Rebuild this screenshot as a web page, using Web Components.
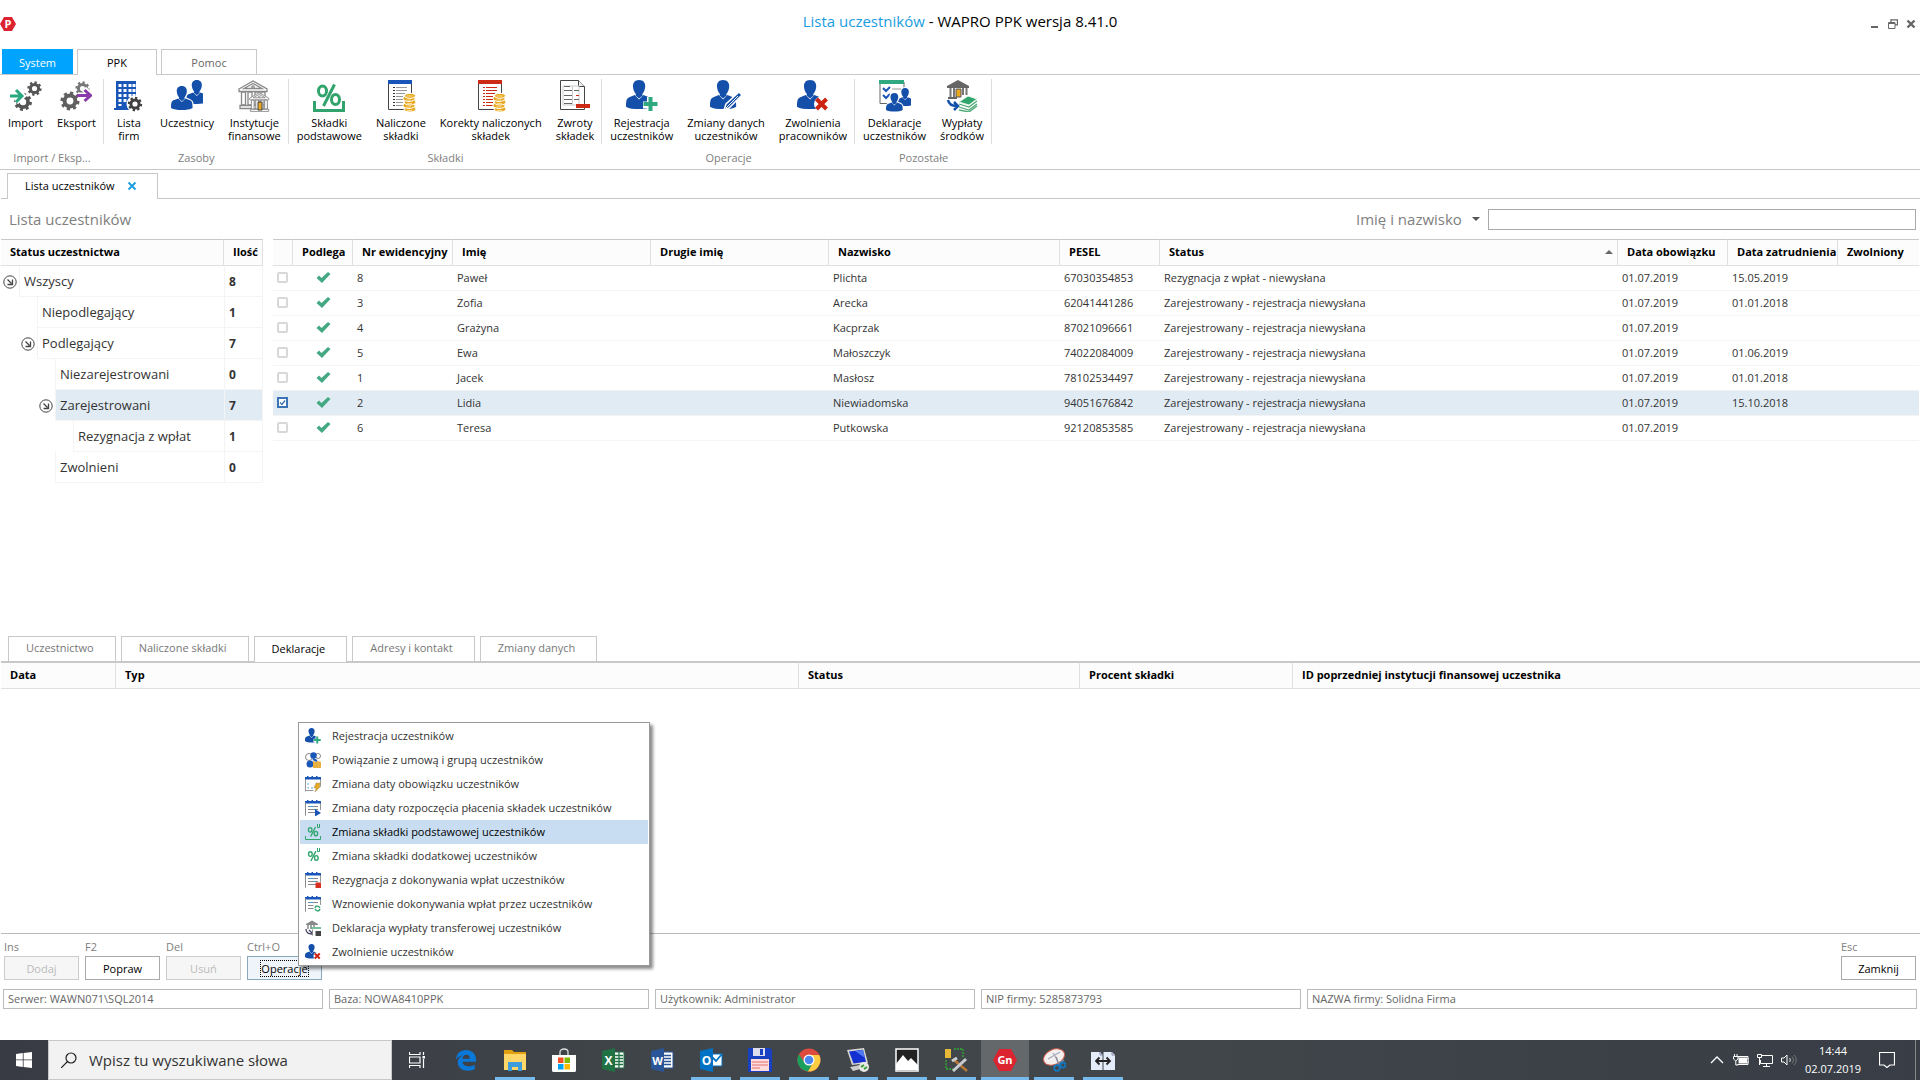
<!DOCTYPE html>
<html lang="pl">
<head>
<meta charset="utf-8">
<title>Lista uczestników - WAPRO PPK wersja 8.41.0</title>
<style>
    :root {
        --line: #c8c8c8;
        --soft: #e0e0e0;
        --faint: #f4f4f4;
        --head: #fcfcfc;
        --select: #e1ebf3;
        --text: #333;
        --muted: #808080;
        --blue: #1a9de0;
    }
    body {
        margin: 0;
        background: #fff;
        color: var(--text);
        font-family: 'Open Sans', 'Noto Sans', sans-serif;
        font-size: 11px;
        line-height: 13px;
    }
</style>
</head>
<body>
<app-window></app-window>
<script>
/* ---------- icons ---------- */

const gear = (cx, cy, r, color) => `
    <circle cx="${cx}" cy="${cy}" r="${r * 0.68}" fill="none" stroke="${color}" stroke-width="${r * 0.5}"/>
    <circle cx="${cx}" cy="${cy}" r="${r}" fill="none" stroke="${color}" stroke-width="${r * 0.38}" pathLength="16" stroke-dasharray="1 1"/>`;

const person = (x, y, s, color = '#1450aa') => `
    <g transform="translate(${x} ${y}) scale(${s})" fill="${color}">
        <path d="M13.5 0C9 0 7 3 7.2 7c.2 3 1.3 5.5 3 7.5l-.4 1.5L13.5 19l3.7-3-.4-1.5c1.7-2 2.800-4.5 3-7.5C20 3 18 0 13.5 0z"/>
        <path d="M9 15.5L4 17.5C1 18.7 0 20 0 27.5 3 29.5 8 30 13.5 30s10.5-.5 13.5-2.5c0-7.5-1-8.8-4-10l-5-2-4.5 4.5z"/>
    </g>`;

const coins = `
    <g fill="#e8a820" stroke="#fff" stroke-width="1">
        <ellipse cx="25" cy="29" rx="6" ry="3"/><ellipse cx="24" cy="25.5" rx="6" ry="3"/>
        <ellipse cx="25" cy="22" rx="6" ry="3"/><ellipse cx="24" cy="18.5" rx="6" ry="3"/>
        <ellipse cx="25" cy="15.8" rx="5.5" ry="2.5"/>
    </g>
    <path d="M21.5 16h6M21 20h5M22 23.5h5M21 27h5M22 30.5h5" stroke="#f8dc90" fill="none"/>`;

const report = (color, text) => `
    <path d="M3.5 3v26.5h23V3" fill="#fff" stroke="#444"/>
    <path d="M3 0h24v4H3z" fill="${color}"/>
    <path d="M8 7.5h2M8 10.5h2M8 13.5h2M8 16.5h2M8 19.5h2M8 22.5h2M8 25.5h2" stroke="${text}"/>
    <path d="M11 7.5h11M11 10.5h11M11 13.5h9M11 16.5h7M11 19.5h7M11 22.5h7M11 25.5h7" stroke="${color === '#1a56b8' ? '#999' : text}"/>
    ${coins}`;

const percent = `
    <g fill="none" stroke="#30a46c" stroke-width="3">
        <ellipse cx="9.5" cy="11" rx="4" ry="5"/><ellipse cx="22.5" cy="19.5" rx="4" ry="5"/>
        <path d="M21.5 4.5L10.5 26"/>
    </g>`;

const calendar = `
    <path d="M.5 2v13.5M15.5 2v8" fill="none" stroke="#999"/>
    <path d="M0 1h2V0h1.500v1h3V0H8v1h3V0h1.500v1H16v2.500H0z" fill="#1a56b8"/>`;
const calendarRows = '<path d="M3 6.5h10M3 9.5h10M3 12.5h8M.5 15.500v-13" stroke="#888"/><path d="M5 6.5h3M9 9.5h2" stroke="#3aa0d0"/>';

const bank = (x, y, s, color, fill = '#fff') => `
    <g transform="translate(${x} ${y}) scale(${s})" fill="${fill}" stroke="${color}" stroke-width="1.3">
        <path d="M1 9L15 1l14 8v2.5H1z"/><path d="M6 8.5L15 3.5l9 5z"/>
        <path d="M3.5 12h4v13h-4zM10 12h4v13h-4zM17 12h4v13h-4zM23 12h4v13h-4z"/>
        <path d="M2 25.5h27v3H2z"/><circle cx="15" cy="7" r="1.2"/>
    </g>`;

// every entry: [viewBox size, markup]
const ICONS = {
    logo: [16, '<path d="M4 1h8l4 7-4 7H4L0 8z" fill="#dc2430"/><text x="8" y="12" text-anchor="middle" font-size="11" font-weight="700" fill="#fff" font-family="Open Sans">P</text>'],
    import: [32, gear(24.5, 8.5, 6, '#555') + gear(13, 22, 7.5, '#555') + '<path d="M0 16h8M6 9.5l6.5 6.5L6 22" fill="none" stroke="#fff" stroke-width="6"/><path d="M0 16h11M6 10l6 6-6 6" fill="none" stroke="#2aa880" stroke-width="3"/>'],
    export: [32, gear(22.5, 8.5, 6, '#777') + gear(10, 21, 8, '#606060') + '<path d="M18 15.5h12M24 9l7 6.5-7 6.5" fill="none" stroke="#fff" stroke-width="6"/><path d="M17 15.5h13M24.5 10l6 5.5-6 5.5" fill="none" stroke="#8a3aaa" stroke-width="3"/>'],
    company: [32, '<path d="M3 1h20v29H1v-2h2z" fill="#1a56b8"/><path d="M7 4v22M12 4v19M17 4v16M21 4v13" stroke="#fff" stroke-width="3" stroke-dasharray="3 2"/><circle cx="22" cy="24" r="8.5" fill="#fff"/>' + gear(22, 24, 6, '#404040')],
    people: [32, person(15, 0, 0.8) + '<g stroke="#fff" stroke-width="3">' + person(0, 6, 0.8) + '</g>' + person(0, 6, 0.8)],
    banks: [32, bank(0, 0, 1, '#888') + bank(11, 12, 0.68, '#888') + '<path d="M20 22h4v8h-4z" fill="#e8a820" stroke="#444"/>'],
    base: [32, percent + '<path d="M1.5 21v9.5h29V21" fill="none" stroke="#30a46c" stroke-width="3"/>'],
    charged: [32, report('#1a56b8', '#333')],
    corrected: [32, report('#cc2a14', '#cc2a14')],
    refunds: [32, '<path d="M1.5.5h18l6 6v23h-24z" fill="#fff" stroke="#444"/><path d="M19.5.5v6h6" fill="#eee" stroke="#444"/><path d="M4 6h16v19H4zM13.5 6v19" fill="none" stroke="#ccc"/><path d="M5 6.5h6M5 10.5h8M15 10.5h5M5 15.5h8M5 19.5h8M15 19.5h5M5 23.5h8" stroke="#666"/><path d="M17 15.5h3" stroke="#cc2a14"/><path d="M17 24h14v4H17z" fill="#cc2a14"/>'],
    register: [32, person(0, 0, 0.97) + '<path d="M17 21.5h4V17h6v4.5h5v7h-5v3h-6v-3h-4z" fill="#fff"/><path d="M24.5 17v14M17.5 24h14" stroke="#30a880" stroke-width="4"/>'],
    edit: [32, person(0, 0, 0.97) + '<path d="M14 30l2-6 13-12 3 3-13 13z" fill="#1450aa" stroke="#fff" stroke-width="1.5"/><path d="M16 28l12-12" stroke="#fff"/>'],
    dismiss: [32, person(0, 0, 0.97) + '<circle cx="24.5" cy="24" r="7.5" fill="#fff"/><path d="M19.5 19l10 10M29.5 19l-10 10" stroke="#cc2410" stroke-width="4"/>'],
    declare: [32, '<path d="M1 2v21.5h24V2" fill="#fff" stroke="#666"/><path d="M0 0h25v4H0z" fill="#30a880"/><path d="M4 8l3 3 4-4M4 15l3 3 4-4" fill="none" stroke="#1a56b8" stroke-width="2"/><path d="M13 9h9" stroke="#bbb" stroke-width="1.5"/><g stroke="#fff" stroke-width="3">' + person(18, 8, 0.6) + '</g>' + person(18, 8, 0.6) + '<g stroke="#fff" stroke-width="4">' + person(7, 13, 0.62) + '</g>' + person(7, 13, 0.62)],
    payout: [32, '<path d="M1 6l11-6 11 6v2H1z" fill="#666"/><path d="M2 18h9" stroke="#666" stroke-width="2"/><path d="M4.5 8v9M8 8v9M17 8v7M20.5 8v7" stroke="#777" stroke-width="2"/><path d="M10 9h5v8h-5z" fill="#e8a820" stroke="#555"/><path d="M2 20c1 5 5 6 9 6M8 22l4 4-4 4" fill="none" stroke="#1450aa" stroke-width="2.5"/><path d="M13 22l9-6 9 3-8 6z" fill="#30a46c" stroke="#e8f8e8"/><path d="M13 24l10 3 8-6M13 27l10 3 8-6M13 30l10 2 8-6" fill="none" stroke="#50a878" stroke-width="1.3"/>'],
    bindGroup: [16, '<circle cx="4" cy="5" r="3.5" fill="none" stroke="#888"/><circle cx="13" cy="4" r="2.5" fill="none" stroke="#888"/><circle cx="8.5" cy="3.5" r="3.2" fill="#1a56b8"/><circle cx="5" cy="12" r="3.5" fill="#1a56b8"/><path d="M8 9l3 1 2-1 3 1v6H8z" fill="#e8b040"/><path d="M8 7l4 2" stroke="#1a56b8" stroke-width="2"/>'],
    dateDuty: [16, calendar + '<path d="M.5 14.500h8" stroke="#999"/><path d="M3 7v5h6" fill="none" stroke="#50b0e0" stroke-dasharray="2 2"/><path d="M11 7h5l-2 3h2l-6 6 1-4H9z" fill="#e8a820" stroke="#998" stroke-width=".5"/>'],
    dateStart: [16, calendar + calendarRows + '<path d="M10 9l6 4-6 3.5z" fill="#1a56b8"/>'],
    baseUser: [16, '<g transform="translate(1 1) scale(.44)">' + percent + '</g><path d="M.5 12v3.500h15V12" fill="none" stroke="#30a46c"/><path d="M12.500 0v3.500h2V0" fill="none" stroke="#30a46c"/>'],
    extraUser: [16, '<g transform="translate(1 1) scale(.46)">' + percent + '</g><path d="M12.500 0v3.500h2V0" fill="none" stroke="#30a46c"/>'],
    resign: [16, calendar + calendarRows + '<path d="M10.5 10.5H16V16h-5.5z" fill="#d83020"/>'],
    resume: [16, calendar + calendarRows + '<path d="M8.5 9H16v7H8.5z" fill="#fff"/><path d="M10 12c1-3 4-2 5 0M15 13c-1 3-4 2-5 0" fill="none" stroke="#30a46c" stroke-width="1.5"/>'],
    transfer: [16, '<path d="M1 4l6-3.5L13 4v1H1z" fill="#888"/><path d="M3 5v4M6 5v4M9 5v2" stroke="#888" stroke-width="1.5"/><path d="M1 9c0 4 3 5 6 5M4 10l3 3" fill="none" stroke="#446" stroke-width="1.3"/><path d="M6 8h10" stroke="#50a878" stroke-width="1.5"/><path d="M7.5 9.5v6" stroke="#888"/><path d="M10.5 11H16v5h-5.5z" fill="#444"/>'],
    tick: [16, '<path d="M1.5 8l2.5-2.5L6.5 8l6.5-6 2.5 2L7 13z" fill="#44a882"/>'],
    node: [14, '<circle cx="7" cy="7" r="6.2" fill="#fff" stroke="#444"/><path d="M4.5 4.5l4 4M9.5 4.5v5h-5" fill="none" stroke="#444" stroke-width="1.3"/>'],
    checked: [11, '<path d="M3 5.500l2 2 3-4" fill="none" stroke="#3a74b4" stroke-width="1.3"/>'],
    close: [10, '<path d="M1.5 1.5l7 7M8.5 1.5l-7 7" stroke="#1a9de0" stroke-width="1.8"/>'],
    winMin: [10, '<path d="M1 7h7v2H1z" fill="#666"/>'],
    winRestore: [10, '<path d="M3 3V.8h6.5v5H7" fill="none" stroke="#666" stroke-width="1.3"/><path d="M.5 3.5h6.5v6H.5zM.5 4.5H7" fill="none" stroke="#666"/>'],
    winClose: [10, '<path d="M1.5 1.5l7 7M8.5 1.5l-7 7" stroke="#666" stroke-width="2.4"/>'],
    start: [16, '<path d="M0 2l6.8-1v6.5H0zM7.6.9L16 0v7.5H7.6zM0 8.3h6.8V15L0 14zM7.6 8.3H16V16l-8.4-1.1z" fill="#fff"/>'],
    lens: [16, '<circle cx="10" cy="6" r="5" fill="none" stroke="#222" stroke-width="1.2"/><path d="M6.5 9.5L0 16" stroke="#222" stroke-width="1.2"/>'],
    tasks: [16, '<path d="M.5 0v2.5h10.5V0M.5 5h10.5v6H.5zM.5 16v-2.5h10.5V16M14.5 0v3M14.5 7v9" fill="none" stroke="#fff" stroke-width="1.2"/><path d="M13.5 4h2.5v2.5h-2.5z" fill="#fff"/>'],
    edge: [24, '<path fill-rule="evenodd" d="M1 11.500C1.500 5 6 1 12 1c7 0 11 5 11 10.500v2.500H8c.5 3.500 3.500 5 7 5 2.500 0 4.500-.6 6.500-1.700v4.700c-2 1-4.500 1.600-7.500 1.600C7 23.600 3 19.500 3 14.500 3 11 5 8.500 8 7 5 7.500 2.500 9 1 11.500zM8.200 10.500h8c0-3-1.500-4.300-3.800-4.300S8.500 8 8.200 10.500z" fill="#0a78d8"/>'],
    explorer: [24, '<path d="M1 2h8l2 2h12v18H1z" fill="#e0a010"/><path d="M1 6h22v16H1z" fill="#ffd668"/><path d="M5 23v-9h14v9h-4v-4H9v4z" fill="#3c9cdc"/>'],
    store: [24, '<path d="M8 8V4c0-4 8-4 8 0v4" fill="none" stroke="#ddd" stroke-width="1.3"/><path d="M0 7h24v16l-1 1H1l-1-1z" fill="#fff"/><path d="M6 9.5h5.5V15H6z" fill="#f25022"/><path d="M12.5 9.5H18V15h-5.5z" fill="#7fba00"/><path d="M6 16h5.5v5.5H6z" fill="#00a4ef"/><path d="M12.5 16H18v5.5h-5.5z" fill="#ffb900"/>'],
    excel: [24, '<path d="M12 4h11v16H12z" fill="#fff" stroke="#207245"/><path d="M13 7.5h9M13 10.5h9M13 13.5h9M13 16.5h9M18 4v16" stroke="#207245" stroke-width="1.3"/><path d="M1 3l13-3v24L1 21z" fill="#207245"/><text x="7.5" y="16.5" text-anchor="middle" font-size="12" font-weight="700" fill="#fff" font-family="Open Sans">X</text>'],
    word: [24, '<path d="M12 4h11v16H12z" fill="#fff" stroke="#2a5699"/><path d="M14 7.5h7M14 10.5h7M14 13.5h7M14 16.5h7" stroke="#2a5699" stroke-width="1.3"/><path d="M1 3l13-3v24L1 21z" fill="#2a5699"/><text x="7.5" y="16.5" text-anchor="middle" font-size="11" font-weight="700" fill="#fff" font-family="Open Sans">W</text>'],
    outlook: [24, '<path d="M12 6h11v12H12z" fill="#fff" stroke="#0072c6"/><path d="M13 9l4 4 6-7" fill="none" stroke="#0072c6" stroke-width="1.8"/><path d="M1 3l13-3v24L1 21z" fill="#0072c6"/><text x="7.5" y="16.5" text-anchor="middle" font-size="12" font-weight="700" fill="#fff" font-family="Open Sans">O</text>'],
    floppy: [24, '<path d="M0 0h22l2 2v22H0z" fill="#1840c0"/><path d="M5 0h12v8H5z" fill="#dde"/><path d="M12 1h3v6h-3z" fill="#1840c0"/><path d="M3 11h18v12H3z" fill="#fdd"/><path d="M4 14h16M4 17h16M4 20h8" stroke="#e07070"/>'],
    chrome: [24, '<circle cx="12" cy="12" r="11.5" fill="#dd4b3e"/><path d="M2 6.2A11.5 11.5 0 0 0 11 23.5l5.5-9.5H7z" fill="#18a05c"/><path d="M22.2 7H12l4.5 7L11 23.5A11.5 11.5 0 0 0 22.2 7z" fill="#ffcd42"/><circle cx="12" cy="12" r="5.5" fill="#fff"/><circle cx="12" cy="12" r="4.3" fill="#4a88f0"/>'],
    remote: [24, '<path d="M1 2l17-2 4 15-16 2z" fill="#d8d8d0"/><path d="M3 3.5l14-1.7 3 12L7.5 15.5z" fill="#1430d0"/><path d="M9 3l8-1 2 8z" fill="#5078f0"/><path d="M4 19l10-2 4 3-11 3z" fill="#ccc"/><circle cx="18" cy="19" r="5" fill="#e8e8e8"/><path d="M15 19l3-2M18 21l3-2" stroke="#30a030" stroke-width="2"/>'],
    photos: [24, '<path d="M1 1h22v22H1z" fill="#222" stroke="#fff" stroke-width="1.5"/><path d="M1 22V16l7-9 5 6 3-3 7 7v5z" fill="#fff"/>'],
    tools: [24, '<path d="M1 1h6v9H1z" fill="#e8b838"/><path d="M10 1h9v9M2 12v9h7" fill="none" stroke="#30b030" stroke-width="1.3" stroke-dasharray="2 1"/><path d="M10 12l13 11" stroke="#b87838" stroke-width="2.5"/><path d="M22 11L9 23" stroke="#c8ccd0" stroke-width="3"/><path d="M8 13l5-3" stroke="#ccc" stroke-width="3"/>'],
    gn: [24, '<path d="M6 1h12l6 11-6 11H6L0 12z" fill="#dc2430"/><text x="12" y="16" text-anchor="middle" font-size="11" font-weight="700" fill="#fff" font-family="Open Sans">Gn</text>'],
    snip: [24, '<ellipse cx="12" cy="9" rx="11" ry="7.5" transform="rotate(-25 12 9)" fill="#f4f0f0" stroke="#d06050"/><path d="M6 11l12-7M11 5l4 6" stroke="#aab" stroke-width="1.3"/><path d="M14 9l3 8M17 15l5-3" stroke="#889" stroke-width="1.5"/><circle cx="15" cy="20" r="2.8" fill="none" stroke="#1478c0" stroke-width="1.8"/><circle cx="21" cy="17" r="2.5" fill="none" stroke="#1478c0" stroke-width="1.8"/>'],
    viewer: [24, '<path d="M0 4h9l2.500 3v15H0zM12.5 4H21l3 3v15H12.5z" fill="#e4ecfa"/><path d="M9 4v3h3M21 4v3h3" fill="none" stroke="#88a"/><path d="M5 13h14M8.500 9.500L5 13l3.500 3.500M15.500 9.500L19 13l-3.500 3.500" fill="none" stroke="#222" stroke-width="1.8"/>'],
    chevron: [16, '<path d="M2 11l6-6 6 6" fill="none" stroke="#fff" stroke-width="1.3"/>'],
    battery: [16, '<path d="M5.5 5.5h9v6h-9z" fill="#fff"/><path d="M4.5 4.5H15V7h1v3h-1v2.5H4.5" fill="none" stroke="#fff"/><path d="M1.5 2v2M4 2v2M.5 4.5h4.5v2.5L2.8 9 .5 7zM2.8 9v4H5" fill="none" stroke="#fff"/>'],
    network: [16, '<path d="M5 3.5h10.5v8H3.5V8M6 14.5h7M9.5 12v2.5" fill="none" stroke="#fff"/><path d="M.5 2.5h4v3h-4zM2.5 6v7" fill="none" stroke="#fff"/>'],
    sound: [16, '<path d="M.5 6H3l3-3v10l-3-3H.5z" fill="none" stroke="#fff"/><path d="M8.5 6c1 1 1 3 0 4" fill="none" stroke="#ddd"/><path d="M11 4.5c2 2 2 5 0 7M13 3c3 3 3 7 0 10" fill="none" stroke="#777"/>'],
    notice: [16, '<path d="M.5.5h15v12.5H11l-3 2.5-3-2.5H.5z" fill="none" stroke="#fff" stroke-width="1.2"/>']
};

class AppIcon extends HTMLElement {
    constructor() {
        super();
        this.attachShadow({ mode: 'open' });
    }

    connectedCallback() {
        const [box, markup] = ICONS[this.getAttribute('name')];
        const size = this.getAttribute('size') || box;
        this.shadowRoot.innerHTML = `
        <style>
            :host { display: inline-flex; flex: none; }
            svg { display: block; }
        </style>
        <svg width="${size}" height="${size}" viewBox="0 0 ${box} ${box}" aria-hidden="true">${markup}</svg>`;
    }
}

/* ---------- base for the elements below ---------- */

class BaseElement extends HTMLElement {
    constructor() {
        super();
        this.attachShadow({ mode: 'open' });
    }

    connectedCallback() {
        const template = document.createElement('template');
        template.innerHTML = `
        <style>
            * { box-sizing: border-box; }
            button { font: inherit; color: inherit; background: none; border: 0; padding: 0; margin: 0; }
            table { border-collapse: separate; border-spacing: 0; table-layout: fixed; width: 100%; }
            th, td { text-align: left; white-space: nowrap; overflow: hidden; }
            th { height: 27px; padding: 0 9px 2px; color: #000; font-weight: 700; background: var(--head);
                border: 0 solid var(--soft); border-right-width: 1px; border-bottom-width: 1px; border-top: 1px solid var(--line); }
            ${this.getStyles()}
        </style>
        ${this.getTemplate()}`;
        this.shadowRoot.appendChild(template.content.cloneNode(true));
    }
}

class TitleBar extends BaseElement {
    getStyles() {
        return `
        :host { display: grid; grid-template-columns: 1fr auto 1fr; align-items: center; height: 49px; box-sizing: border-box; padding-bottom: 2px; }
        h1 { margin: 0 0 6px; font-size: 15px; line-height: 20px; font-weight: 400; color: #000; }
        h1 span { color: var(--blue); }
        .controls { display: flex; gap: 8px; justify-content: flex-end; padding-right: 4px; }
        .controls button { display: flex; }`;
    }

    getTemplate() {
        return `
        <app-icon name="logo"></app-icon>
        <h1><span>Lista uczestników</span> - WAPRO PPK wersja 8.41.0</h1>
        <div class="controls">
            <button aria-label="Minimalizuj"><app-icon name="winMin"></app-icon></button>
            <button aria-label="Przywróć"><app-icon name="winRestore"></app-icon></button>
            <button aria-label="Zamknij okno"><app-icon name="winClose"></app-icon></button>
        </div>`;
    }
}

class RibbonButton extends BaseElement {
    getStyles() {
        return `
        :host { display: flex; }
        button { display: flex; flex-direction: column; align-items: center; gap: 4px; min-width: 48px; padding: 1px 7px 0; color: #000; text-align: center; white-space: pre-line; }`;
    }

    getTemplate() {
        return `<button><app-icon name="${this.getAttribute('icon')}"></app-icon><span><slot></slot></span></button>`;
    }
}

class RibbonGroup extends BaseElement {
    getStyles() {
        return `
        :host { display: flex; flex-direction: column; }
        .items { display: flex; height: 65px; padding-left: 1px; border-right: 1px solid #ddd; }
        .caption { margin-top: 7px; text-align: center; color: var(--muted); }`;
    }

    getTemplate() {
        return `<div class="items"><slot></slot></div><div class="caption">${this.getAttribute('caption')}</div>`;
    }
}

class RibbonBar extends BaseElement {
    getStyles() {
        return `
        :host { display: block; border-bottom: 1px solid var(--line); }
        nav { display: flex; align-items: flex-end; gap: 4px; padding-left: 2px; border-bottom: 1px solid var(--line); }
        nav button { width: 96px; height: 25px; border: 1px solid var(--line); border-bottom: 0; color: #666; }
        nav .system { width: 71px; background: #00a4ff; border-color: #00a4ff; color: #fff; }
        nav .active { width: 80px; height: 26px; margin-bottom: -1px; background: #fff; color: #000; }
        .groups { display: flex; height: 94px; padding-top: 4px; }`;
    }

    getTemplate() {
        return `
        <nav><button class="system">System</button><button class="active">PPK</button><button>Pomoc</button></nav>
        <div class="groups">
            <ribbon-group caption="Import / Eksp...">
                <ribbon-button icon="import">Import</ribbon-button>
                <ribbon-button icon="export">Eksport</ribbon-button>
            </ribbon-group>
            <ribbon-group caption="Zasoby">
                <ribbon-button icon="company">Lista\nfirm</ribbon-button>
                <ribbon-button icon="people">Uczestnicy</ribbon-button>
                <ribbon-button icon="banks">Instytucje\nfinansowe</ribbon-button>
            </ribbon-group>
            <ribbon-group caption="Składki">
                <ribbon-button icon="base">Składki\npodstawowe</ribbon-button>
                <ribbon-button icon="charged">Naliczone\nskładki</ribbon-button>
                <ribbon-button icon="corrected">Korekty naliczonych\nskładek</ribbon-button>
                <ribbon-button icon="refunds">Zwroty\nskładek</ribbon-button>
            </ribbon-group>
            <ribbon-group caption="Operacje">
                <ribbon-button icon="register">Rejestracja\nuczestników</ribbon-button>
                <ribbon-button icon="edit">Zmiany danych\nuczestników</ribbon-button>
                <ribbon-button icon="dismiss">Zwolnienia\npracowników</ribbon-button>
            </ribbon-group>
            <ribbon-group caption="Pozostałe">
                <ribbon-button icon="declare">Deklaracje\nuczestników</ribbon-button>
                <ribbon-button icon="payout">Wypłaty\nśrodków</ribbon-button>
            </ribbon-group>
        </div>`;
    }
}

class DocumentHeader extends BaseElement {
    getStyles() {
        return `
        :host { display: block; padding: 3px 0 0 1px; }
        .tabs { display: flex; padding-left: 6px; border-bottom: 1px solid var(--line); }
        .tab { display: flex; align-items: center; justify-content: space-between; width: 151px; height: 26px; margin-bottom: -1px; padding: 0 20px 2px 17px; border: 1px solid var(--line); border-bottom: 0; background: #fff; color: #000; }
        .tab button { display: flex; }
        .bar { display: flex; align-items: center; height: 40px; padding: 0 4px 0 8px; font-size: 15px; color: var(--muted); }
        h2 { flex: 1; margin: 0; font-size: 15px; font-weight: 400; }
        select { appearance: none; width: 132px; padding: 0; border: 0; background: none; font: inherit; line-height: 20px; color: inherit; }
        .pick { position: relative; }
        .pick::after { content: ''; position: absolute; right: 8px; top: 8px; border: 4px solid transparent; border-top-color: #555; border-bottom: 0; }
        input { flex: 0 1 428px; height: 21px; border: 1px solid #aaa; padding: 0 4px; }`;
    }

    getTemplate() {
        return `
        <div class="tabs"><div class="tab"><span>Lista uczestników</span><button aria-label="Zamknij kartę"><app-icon name="close"></app-icon></button></div></div>
        <div class="bar">
            <h2>Lista uczestników</h2>
            <div class="pick"><select aria-label="Szukaj według"><option>Imię i nazwisko</option></select></div>
            <input type="text" aria-label="Szukana wartość">
        </div>`;
    }
}

class StatusTree extends BaseElement {
    getStyles() {
        return `
        :host { display: block; width: 262px; }
        td { height: 31px; padding: 0; font-size: 13px; }
        .node { display: flex; height: 31px; }
        .pad { display: flex; align-items: center; justify-content: flex-end; padding-right: 2px; }
        .pad button { display: flex; }
        .name { flex: 1; display: flex; align-items: center; padding-left: 4px; border: solid var(--faint); border-width: 0 0 1px 1px; }
        .count { padding-left: 4px; border: solid var(--faint); border-width: 0 1px 1px; font-size: 12px; font-weight: 700; }
        .on .name, .on .count { background: var(--select); }`;
    }

    getTemplate() {
        const rows = [
            ['Wszyscy', 8, 0, true], ['Niepodlegający', 1, 1], ['Podlegający', 7, 1, true],
            ['Niezarejestrowani', 0, 2], ['Zarejestrowani', 7, 2, true],
            ['Rezygnacja z wpłat', 1, 3], ['Zwolnieni', 0, 2]
        ];
        return `
        <table>
            <colgroup><col><col width="39"></colgroup>
            <tr><th>Status uczestnictwa</th><th>Ilość</th></tr>
            ${rows.map(([name, count, level, open]) => `
            <tr class="${name === 'Zarejestrowani' ? 'on' : ''}">
                <td><div class="node">
                    <span class="pad" style="width: ${18 + 18 * level}px">${open ? '<button aria-label="Zwiń"><app-icon name="node"></app-icon></button>' : ''}</span>
                    <span class="name">${name}</span>
                </div></td>
                <td class="count">${count}</td>
            </tr>`).join('')}
        </table>`;
    }
}

class ParticipantsGrid extends BaseElement {
    getStyles() {
        return `
        :host { display: block; flex: 1; min-width: 0; }
        th:last-child { border-right: 0; }
        td { height: 25px; padding: 0 4px 1px; border-bottom: 1px solid var(--faint); }
        td:nth-child(2) { text-align: center; }
        td app-icon { vertical-align: middle; }
        .on td { background: var(--select); }
        .sorted { display: flex; align-items: center; justify-content: space-between; }
        .sorted::after { content: ''; margin-right: -5px; border: 4px solid transparent; border-bottom-color: #666; border-top: 0; }
        .box { display: grid; width: 11px; height: 11px; }
        .box > * { grid-area: 1 / 1; }
        .box app-icon { pointer-events: none; }
        input { appearance: none; width: 11px; height: 11px; margin: 0; border: 2px solid #d8d8d8; border-radius: 2px; background: #fff; }
        input:checked { border-color: #3a74b4; border-radius: 0; }`;
    }

    getTemplate() {
        const late = 'Zarejestrowany - rejestracja niewysłana';
        const rows = [
            [8, 'Paweł', 'Plichta', '67030354853', 'Rezygnacja z wpłat - niewysłana', '15.05.2019'],
            [3, 'Zofia', 'Arecka', '62041441286', late, '01.01.2018'],
            [4, 'Grażyna', 'Kacprzak', '87021096661', late, ''],
            [5, 'Ewa', 'Małoszczyk', '74022084009', late, '01.06.2019'],
            [1, 'Jacek', 'Masłosz', '78102534497', late, '01.01.2018'],
            [2, 'Lidia', 'Niewiadomska', '94051676842', late, '15.10.2018'],
            [6, 'Teresa', 'Putkowska', '92120853585', late, '']
        ];
        return `
        <table>
            <colgroup>
                <col width="20"><col width="60"><col width="100"><col width="198"><col width="178"><col width="231">
                <col width="100"><col><col width="110"><col width="110"><col width="81">
            </colgroup>
            <tr>
                <th></th><th>Podlega</th><th>Nr ewidencyjny</th><th>Imię</th><th>Drugie imię</th><th>Nazwisko</th>
                <th>PESEL</th><th><div class="sorted">Status</div></th><th>Data obowiązku</th><th>Data zatrudnienia</th><th>Zwolniony</th>
            </tr>
            ${rows.map(([id, name, surname, pesel, status, hired]) => `
            <tr class="${id === 2 ? 'on' : ''}">
                <td><span class="box"><input type="checkbox" aria-label="Zaznacz: ${name} ${surname}"${id === 2 ? ' checked' : ''}>${id === 2 ? '<app-icon name="checked"></app-icon>' : ''}</span></td>
                <td><app-icon name="tick"></app-icon></td>
                <td>${id}</td><td>${name}</td><td></td><td>${surname}</td><td>${pesel}</td>
                <td>${status}</td><td>01.07.2019</td><td>${hired}</td><td></td>
            </tr>`).join('')}
        </table>`;
    }
}

class DetailsPanel extends BaseElement {
    getStyles() {
        return `
        :host { display: block; min-height: 0; padding-left: 1px; }
        nav { display: flex; align-items: flex-end; gap: 5px; padding-left: 7px; border-bottom: 1px solid var(--line); }
        nav button { height: 25px; padding: 0 21px 2px 17px; border: 1px solid var(--line); border-bottom: 0; color: #777; }
        nav .active { height: 26px; margin-bottom: -1px; background: #fff; color: #000; }
        th:last-child { border-right: 0; }`;
    }

    getTemplate() {
        return `
        <nav>
            <button>Uczestnictwo</button><button>Naliczone składki</button><button class="active">Deklaracje</button>
            <button>Adresy i kontakt</button><button>Zmiany danych</button>
        </nav>
        <table>
            <colgroup><col width="115"><col><col width="281"><col width="213"><col width="627"></colgroup>
            <tr><th>Data</th><th>Typ</th><th>Status</th><th>Procent składki</th><th>ID poprzedniej instytucji finansowej uczestnika</th></tr>
        </table>`;
    }
}

class ContextMenu extends BaseElement {
    getStyles() {
        return `
        :host { display: block; box-sizing: border-box; width: 352px; padding: 1px; border: 1px solid #999; background: #fff; box-shadow: 3px 3px 3px rgba(0, 0, 0, .45); }
        button { display: flex; align-items: center; gap: 11px; width: 100%; height: 24px; padding-left: 5px; color: #333; }
        span { padding-bottom: 2px; }
        .on { background: #c8ddf1; color: #000; }`;
    }

    getTemplate() {
        const items = [
            ['register', 'Rejestracja uczestników'],
            ['bindGroup', 'Powiązanie z umową i grupą uczestników'],
            ['dateDuty', 'Zmiana daty obowiązku uczestników'],
            ['dateStart', 'Zmiana daty rozpoczęcia płacenia składek uczestników'],
            ['baseUser', 'Zmiana składki podstawowej uczestników'],
            ['extraUser', 'Zmiana składki dodatkowej uczestników'],
            ['resign', 'Rezygnacja z dokonywania wpłat uczestników'],
            ['resume', 'Wznowienie dokonywania wpłat przez uczestników'],
            ['transfer', 'Deklaracja wypłaty transferowej uczestników'],
            ['dismiss', 'Zwolnienie uczestników']
        ];
        return items.map(([icon, label]) => `
        <button class="${icon === 'baseUser' ? 'on' : ''}"><app-icon name="${icon}" size="16"></app-icon><span>${label}</span></button>`).join('');
    }
}

class ActionButton extends BaseElement {
    getStyles() {
        return `
        :host { display: block; position: relative; width: 75px; }
        .key { display: block; margin-bottom: 3px; color: var(--muted); }
        button { width: 100%; height: 24px; border: 1px solid #aaa; background: #fff; color: #000; }
        button:disabled { border-color: #ccc; background: #f6f6f6; color: #bbb; }
        :host([open]) button { border-color: #8aa8bc; background: #eef4fa; }
        :host([open]) .label { outline: 1px dotted #000; }
        ::slotted(context-menu) { position: absolute; left: 51px; bottom: 14px; z-index: 2; }`;
    }

    getTemplate() {
        return `
        <label class="key" for="action">${this.getAttribute('key')}</label>
        <button id="action"${this.hasAttribute('off') ? ' disabled' : ''}><span class="label">${this.getAttribute('label')}</span></button>
        <slot></slot>`;
    }
}

class ActionBar extends BaseElement {
    getStyles() {
        return `
        :host { display: flex; gap: 6px; margin-left: 1px; padding: 6px 4px 9px 3px; border-top: 1px solid #bbb; }
        .end { margin-left: auto; }`;
    }

    getTemplate() {
        return `
        <action-button key="Ins" label="Dodaj" off></action-button>
        <action-button key="F2" label="Popraw"></action-button>
        <action-button key="Del" label="Usuń" off></action-button>
        <action-button key="Ctrl+O" label="Operacje" open><context-menu></context-menu></action-button>
        <action-button class="end" key="Esc" label="Zamknij"></action-button>`;
    }
}

class StatusBar extends BaseElement {
    getStyles() {
        return `
        :host { display: grid; grid-template-columns: repeat(4, 320px) 1fr; gap: 6px; padding: 0 3px 31px; color: #666; }
        div { height: 20px; padding: 2px 4px; border: 1px solid #bbb; white-space: nowrap; }`;
    }

    getTemplate() {
        return `
        <div>Serwer: WAWN071\\SQL2014</div><div>Baza: NOWA8410PPK</div><div>Użytkownik: Administrator</div>
        <div>NIP firmy: 5285873793</div><div>NAZWA firmy: Solidna Firma</div>`;
    }
}

class TaskBar extends BaseElement {
    getStyles() {
        return `
        :host { display: flex; height: 40px; background: linear-gradient(90deg, #383b43, #41464a 40%, #41464a 60%, #383d46); color: #fff; }
        button { display: flex; align-items: center; justify-content: center; }
        .start { width: 48px; }
        .search { display: flex; align-items: center; gap: 12px; width: 344px; padding-left: 12px; border: 1px solid #c8c8c8; background: #f2f2f2; }
        .search input { flex: 1; min-width: 0; border: 0; padding: 0; background: none; font: inherit; font-size: 15px; line-height: 20px; }
        .search input::placeholder { color: #333; opacity: 1; }
        .apps { display: flex; flex: 1; gap: 1px; padding-left: 1px; }
        .apps button { width: 48px; }
        .run { background: linear-gradient(#76b9ed, #76b9ed) bottom / 40px 3px no-repeat; }
        .apps .now { background: linear-gradient(#76b9ed, #76b9ed) bottom / 100% 3px no-repeat #64686b; }
        .tray { display: flex; align-items: center; gap: 8px; }
        .clock { width: 56px; margin-right: 10px; text-align: center; line-height: 18px; }
        .notice { margin-right: 12px; }
        .edge { width: 5px; align-self: stretch; border-left: 1px solid #888; }`;
    }

    getTemplate() {
        const apps = [
            ['edge', 'Edge'], ['explorer', 'Eksplorator', 'run'], ['store', 'Sklep'], ['excel', 'Excel'], ['word', 'Word'],
            ['outlook', 'Outlook', 'run'], ['floppy', 'Menedżer plików', 'run'], ['chrome', 'Chrome', 'run'],
            ['remote', 'Pulpit zdalny', 'run'], ['photos', 'Zdjęcia', 'run'], ['tools', 'Narzędzia', 'run'],
            ['gn', 'WAPRO', 'now'], ['snip', 'Wycinanie', 'run'], ['viewer', 'Zdalna pomoc', 'run']
        ];
        return `
        <button class="start" aria-label="Start"><app-icon name="start"></app-icon></button>
        <label class="search"><app-icon name="lens"></app-icon><input type="text" aria-label="Wyszukaj" placeholder="Wpisz tu wyszukiwane słowa"></label>
        <div class="apps">
            <button aria-label="Widok zadań"><app-icon name="tasks"></app-icon></button>
            ${apps.map(([icon, label, state]) => `<button class="${state || ''}" aria-label="${label}"><app-icon name="${icon}" size="${icon === 'edge' ? 22 : 24}"></app-icon></button>`).join('')}
        </div>
        <div class="tray">
            <app-icon name="chevron"></app-icon><app-icon name="battery"></app-icon>
            <app-icon name="network"></app-icon><app-icon name="sound"></app-icon>
            <div class="clock">14:44<br>02.07.2019</div>
            <button class="notice" aria-label="Powiadomienia"><app-icon name="notice"></app-icon></button>
            <div class="edge"></div>
        </div>`;
    }
}

class AppWindow extends BaseElement {
    getStyles() {
        return `
        :host { display: flex; flex-direction: column; min-height: 100vh; }
        main { flex: 1; display: grid; grid-template-rows: 4fr 3fr; }
        .lists { display: flex; gap: 10px; padding: 0 1px; }`;
    }

    getTemplate() {
        return `
        <title-bar></title-bar>
        <ribbon-bar></ribbon-bar>
        <document-header></document-header>
        <main>
            <div class="lists">
                <status-tree></status-tree>
                <participants-grid></participants-grid>
            </div>
            <details-panel></details-panel>
        </main>
        <action-bar></action-bar>
        <status-bar></status-bar>
        <task-bar></task-bar>`;
    }
}

customElements.define('app-icon', AppIcon);
customElements.define('title-bar', TitleBar);
customElements.define('ribbon-button', RibbonButton);
customElements.define('ribbon-group', RibbonGroup);
customElements.define('ribbon-bar', RibbonBar);
customElements.define('document-header', DocumentHeader);
customElements.define('status-tree', StatusTree);
customElements.define('participants-grid', ParticipantsGrid);
customElements.define('details-panel', DetailsPanel);
customElements.define('context-menu', ContextMenu);
customElements.define('action-button', ActionButton);
customElements.define('action-bar', ActionBar);
customElements.define('status-bar', StatusBar);
customElements.define('task-bar', TaskBar);
customElements.define('app-window', AppWindow);
</script>
</body>
</html>
